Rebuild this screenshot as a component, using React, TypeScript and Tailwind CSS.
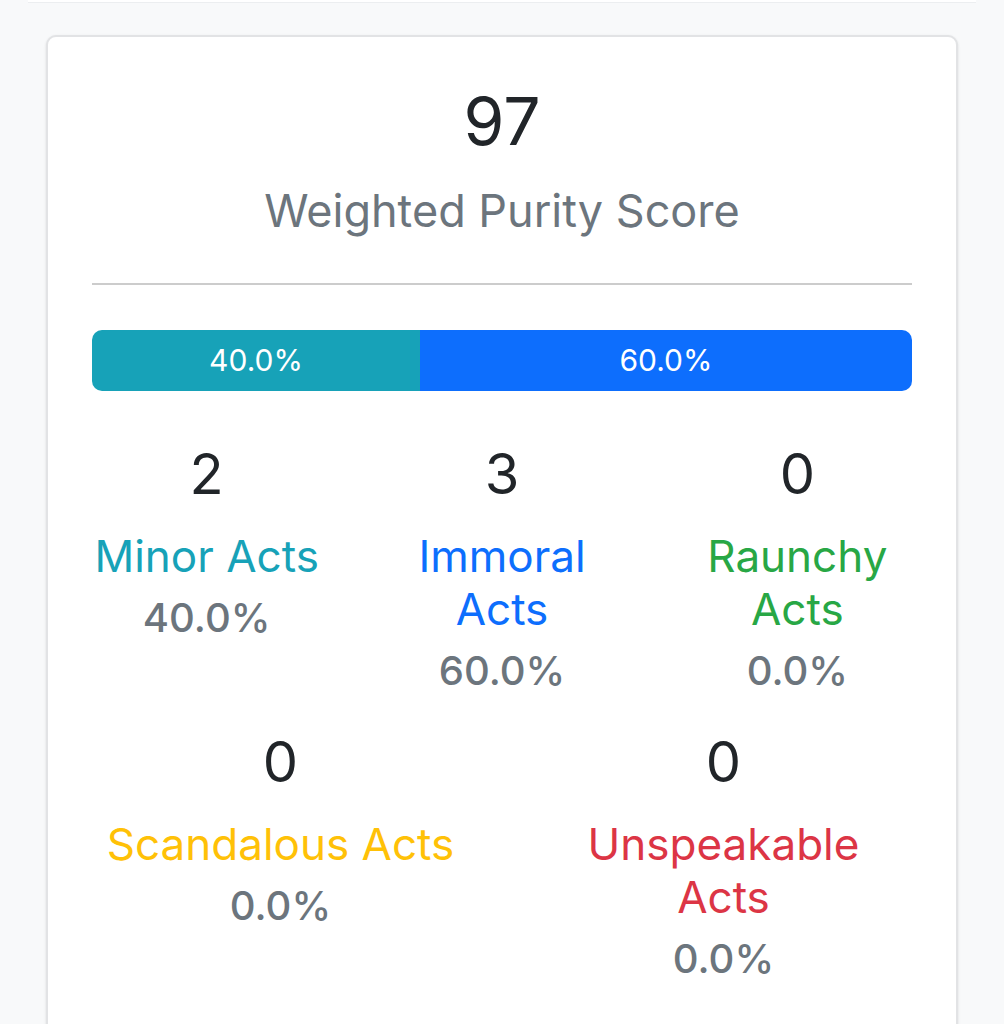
import React from "react";

const font = { fontFamily: 'Inter, "Noto Sans", sans-serif' };

type Stat = { n: number; label: string; pct: string; color: string };

const row1: Stat[] = [
  { n: 2, label: "Minor Acts", pct: "40.0%", color: "text-[#17a2b8]" },
  { n: 3, label: "Immoral Acts", pct: "60.0%", color: "text-[#0d6efd]" },
  { n: 0, label: "Raunchy Acts", pct: "0.0%", color: "text-[#28a745]" },
];
const row2: Stat[] = [
  { n: 0, label: "Scandalous Acts", pct: "0.0%", color: "text-[#ffc107]" },
  { n: 0, label: "Unspeakable Acts", pct: "0.0%", color: "text-[#dc3545]" },
];

function StatCol({ s, wide }: { s: Stat; wide?: boolean }) {
  return (
    <div className={`${wide ? "px-[40px]" : "px-[30px]"} text-center`}>
      <div className="text-[56px] leading-[67px] text-[#212529] mb-[22px]">{s.n}</div>
      <div className={`text-[44px] leading-[53px] ${s.color}`}>{s.label}</div>
      <div className="text-[40px] leading-[48px] font-medium text-[#6c757d] mt-[11px]">{s.pct}</div>
    </div>
  );
}

export default function App() {
  return (
    <div className="min-h-screen bg-[#f8f9fa] overflow-hidden" style={font}>
      <div className="mx-[28px] h-[3px] bg-white border-b border-[#eceef0]" />
      <div className="mt-[32px] mx-[46px] bg-white border-2 border-[#e2e3e5] rounded-[10px] shadow-sm px-[44px] pt-[43px] pb-[60px]">
        <div className="text-center text-[66px] leading-[82px] text-[#212529]">97</div>
        <div className="text-center text-[45px] leading-[58px] text-[#6c757d] mt-[20px]">Weighted Purity Score</div>
        <div className="mt-[43px] h-[2px] bg-[#cccccc]" />
        <div className="mt-[45px] h-[61px] rounded-[10px] overflow-hidden flex text-white text-[30px]">
          <div className="w-[40%] bg-[#17a2b8] flex items-center justify-center">40.0%</div>
          <div className="w-[60%] bg-[#0d6efd] flex items-center justify-center">60.0%</div>
        </div>
        <div className="mx-[-33px] mt-[50px] grid grid-cols-3">
          {row1.map((s, i) => (
            <StatCol key={i} s={s} />
          ))}
        </div>
        <div className="mx-[-33px] mt-[34px] grid grid-cols-2">
          {row2.map((s, i) => (
            <StatCol key={i} s={s} wide />
          ))}
        </div>
      </div>
    </div>
  );
}
